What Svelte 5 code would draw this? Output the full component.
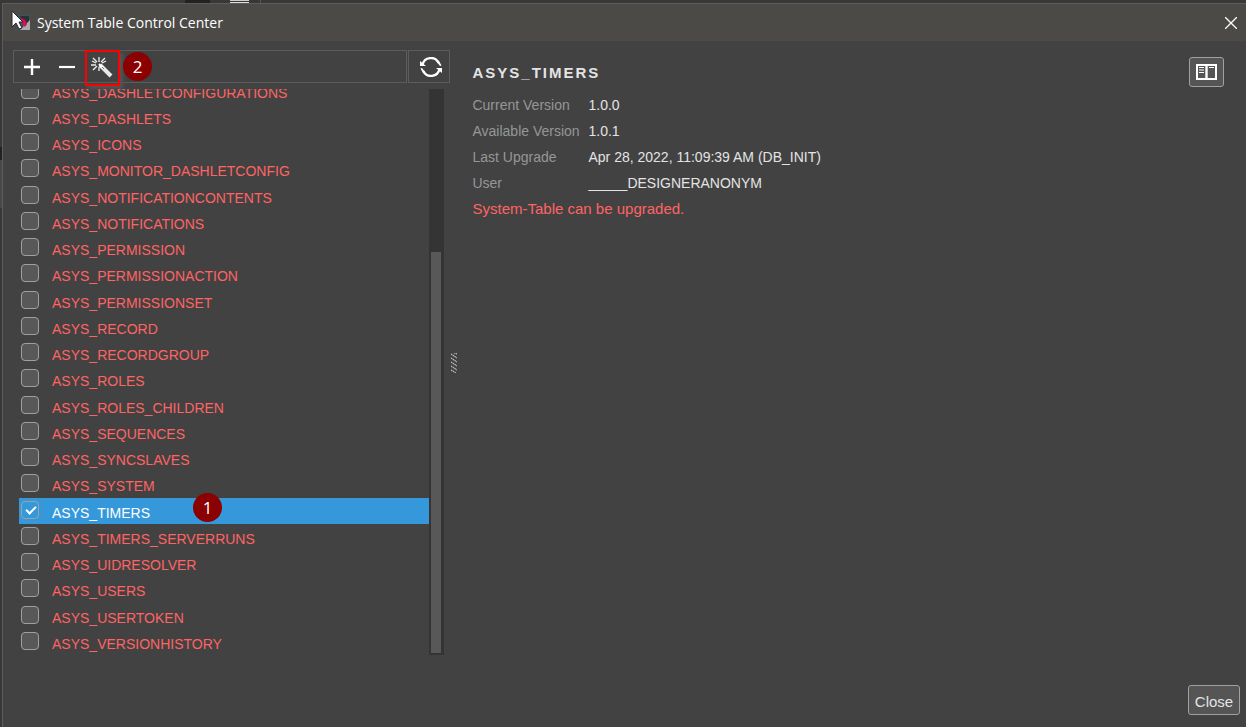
<script lang="ts">
	const tables = [
		'ASYS_DASHLETCONFIGURATIONS',
		'ASYS_DASHLETS',
		'ASYS_ICONS',
		'ASYS_MONITOR_DASHLETCONFIG',
		'ASYS_NOTIFICATIONCONTENTS',
		'ASYS_NOTIFICATIONS',
		'ASYS_PERMISSION',
		'ASYS_PERMISSIONACTION',
		'ASYS_PERMISSIONSET',
		'ASYS_RECORD',
		'ASYS_RECORDGROUP',
		'ASYS_ROLES',
		'ASYS_ROLES_CHILDREN',
		'ASYS_SEQUENCES',
		'ASYS_SYNCSLAVES',
		'ASYS_SYSTEM',
		'ASYS_TIMERS',
		'ASYS_TIMERS_SERVERRUNS',
		'ASYS_UIDRESOLVER',
		'ASYS_USERS',
		'ASYS_USERTOKEN',
		'ASYS_VERSIONHISTORY'
	];

	const details = [
		['Current Version', '1.0.0'],
		['Available Version', '1.0.1'],
		['Last Upgrade', 'Apr 28, 2022, 11:09:39 AM (DB_INIT)'],
		['User', '_____DESIGNERANONYM']
	];

	let checked = $state(['ASYS_TIMERS']);
</script>

<div class="desktop">
	<div class="dialog">
		<header class="titlebar">
			<svg class="app-icon" width="22" height="24" viewBox="0 0 22 24" aria-hidden="true">
				<path d="M6 4h12v15H6z" fill="#34575f" />
				<path d="M8 5h9v8l-4 4z" fill="#2b3038" />
				<path d="M18 9v10H8z" fill="#aaaaad" />
				<path d="M9 7l4 2 2 4-2 3-4-4z" fill="#d3134f" />
				<path d="M0 0v16l4-4 3 6 3-1-3-6h4z" fill="#fff" stroke="#24272f" />
			</svg>
			<h1>System Table Control Center</h1>
			<button class="dismiss" aria-label="Close window">
				<svg width="12" height="12" viewBox="0 0 12 12">
					<path d="M0 0l12 12M12 0L0 12" stroke="#fff" stroke-width="1.3" />
				</svg>
			</button>
		</header>

		<div class="content">
			<section class="tables">
				<div class="toolbar">
					<div class="tools">
						<button aria-label="Add">
							<svg width="16" height="16" viewBox="0 0 16 16">
								<path d="M8 0v16M0 8h16" stroke="#fff" stroke-width="2.4" />
							</svg>
						</button>
						<button aria-label="Remove">
							<svg width="16" height="16" viewBox="0 0 16 16">
								<path d="M0 8h16" stroke="#fff" stroke-width="2.2" />
							</svg>
						</button>
						<button class="wizard" aria-label="Upgrade">
							<svg width="22" height="22" viewBox="0 0 22 22" fill="none">
								<path
									d="M7 0v5M1 1l4 4M13 1l-4 4M0 4l4 2M14 4l-4 2M-1 8h5M1 13l4-4M7 14v-4"
									stroke="#eee"
									stroke-width="1.3"
								/>
								<path d="M8 8l11 11" stroke="#e8e8e8" stroke-width="4" />
								<path d="M7 7l4 4" stroke="#fff" stroke-width="2" />
								<path d="M10 10l2 2" stroke="#777" stroke-width="1" />
							</svg>
							<span class="marker">2</span>
						</button>
					</div>
					<button class="refresh" aria-label="Refresh">
						<svg width="22" height="20" viewBox="0 0 22 20">
							<path
								d="M2.500 8a8.600 8.600 0 0 1 16.200-2M19.500 12a8.600 8.600 0 0 1-16.200 2"
								fill="none"
								stroke="#fff"
								stroke-width="2.300"
							/>
							<path d="M0 4v5h6zM22 16v-5h-6z" fill="#fff" />
							<path d="M19 4l2.500 4.500-1.500.5-3-4zM3 16L.5 11.500l1.500-.5 3 4z" fill="#fff" />
						</svg>
					</button>
				</div>

				<div class="scroller">
					<ul>
						{#each tables as name}
							<li class:selected={checked.includes(name)}>
								<label>
									<input type="checkbox" value={name} bind:group={checked} />
									<span class="name">{name}</span>
								</label>
								{#if name === 'ASYS_TIMERS'}
									<span class="marker">1</span>
								{/if}
							</li>
						{/each}
					</ul>
					<div class="track"><div class="thumb"></div></div>
				</div>
			</section>

			<div class="splitter">
				<svg width="6" height="20" viewBox="0 0 6 20" aria-hidden="true">
					<path
						d="M0 1l6 4M0 5l6 4M0 9l6 4M0 13l6 4M0 17l5 3M3 0l3 1"
						stroke="#c4c4c4"
						stroke-width="1.200"
						stroke-dasharray="1.500 .6"
					/>
				</svg>
			</div>

			<section class="details">
				<div class="info">
					<h2>ASYS_TIMERS</h2>
					<dl>
						{#each details as [term, value]}
							<dt>{term}</dt>
							<dd>{value}</dd>
						{/each}
					</dl>
					<p>System-Table can be upgraded.</p>
				</div>
				<button class="boxed manual" aria-label="Documentation">
					<svg width="21" height="16" viewBox="0 0 21 16">
						<path d="M1 1h19v14H1z" fill="none" stroke="#fff" stroke-width="2" />
						<path d="M10.500 1v14" stroke="#fff" stroke-width="2.400" />
						<path d="M3 3.500h5M3 6h5M3 8.500h5M13 3.500h5" stroke="#fff" stroke-width="1.100" />
					</svg>
				</button>
			</section>
		</div>

		<footer>
			<button class="boxed close">Close</button>
		</footer>
	</div>
</div>

<style>
	:global(body) {
		margin: 0;
		background: #333;
	}

	.desktop {
		box-sizing: border-box;
		min-height: 100vh;
		padding: 3px 0 0 2px;
		display: flex;
		background:
			linear-gradient(#ddd, #ddd) 230px 2px / 19px 1px no-repeat,
			linear-gradient(#ccc, #ccc) 230px 0 / 19px 1px no-repeat,
			linear-gradient(#555, #555) 260px 0 / 1px 3px no-repeat,
			linear-gradient(#222, #222) 185px 0 / 25px 3px no-repeat,
			linear-gradient(#222, #222) 0 147px / 2px 13px no-repeat,
			linear-gradient(#484848, #484848) 0 160px / 2px 48px no-repeat,
			#383838;
		font: 15px/26px 'Liberation Sans', Arial, sans-serif;
	}

	.dialog {
		flex: 1;
		display: flex;
		flex-direction: column;
		border: solid #5c5c5c;
		border-width: 1px 0 0 1px;
		background: #424242;
		color: #e4e4e4;
	}

	button {
		padding: 0;
		border: 0;
		background: none;
		color: inherit;
		font: inherit;
		display: flex;
		align-items: center;
		justify-content: center;
	}

	.titlebar {
		display: flex;
		align-items: center;
		height: 37px;
		padding: 0 9px;
		background: #4c4a47;
	}

	.app-icon {
		margin-right: 3px;
		overflow: visible;
	}

	h1 {
		flex: 1;
		margin: 0;
		color: #fff;
		font: 14px/20px 'Open Sans', 'Noto Sans', sans-serif;
	}

	.content {
		flex: 1;
		display: flex;
		padding-top: 9px;
	}

	.tables {
		box-sizing: border-box;
		width: 36%;
		padding-left: 10px;
		display: flex;
		flex-direction: column;
	}

	.toolbar {
		display: flex;
		gap: 1px;
		height: 33px;
	}

	.tools {
		flex: 1;
		display: flex;
		border: 1px solid #5c5c5c;
	}

	.tools button {
		width: 35px;
	}

	.tools .wizard {
		position: relative;
		margin: -1px 0 -4px 1px;
		border: 2px solid #f00;
		box-shadow: 3px 3px 4px #555;
	}

	.wizard svg {
		overflow: visible;
	}

	.refresh {
		width: 42px;
		padding-left: 4px;
		border: 1px solid #5c5c5c;
	}

	.marker {
		position: absolute;
		width: 29px;
		height: 29px;
		border-radius: 50%;
		background: #8b0000;
		color: #fff;
		font: 17px/29px 'Open Sans', 'Noto Sans', sans-serif;
		text-align: center;
	}

	.wizard .marker {
		left: 36px;
		top: 0;
	}

	.scroller {
		flex: 1;
		display: flex;
		align-items: stretch;
		height: 566px;
		margin: 6px 6px 0 6px;
	}

	ul {
		flex: 1;
		display: grid;
		align-content: end;
		grid-auto-rows: 26px 26px 26px 27px;
		height: 566px;
		margin: 0;
		padding: 0;
		list-style: none;
		overflow: hidden;
		font-size: 14px;
	}

	li {
		position: relative;
		color: #ff6464;
	}

	li.selected {
		background: #3498db;
		color: #fff;
		z-index: 1;
	}

	li .marker {
		left: 174px;
		top: -5px;
	}

	label {
		display: flex;
		align-items: flex-start;
		gap: 13px;
		padding-left: 2px;
	}

	input {
		appearance: none;
		box-sizing: border-box;
		width: 18px;
		height: 18px;
		margin: 3px 0 0;
		border: 1px solid #a0a0a0;
		border-radius: 4px;
		background: #585858;
	}

	input:checked {
		position: relative;
		background: #3498db;
	}

	input:checked::after {
		content: '';
		position: absolute;
		left: 4px;
		top: 4px;
		width: 8px;
		height: 4px;
		border: solid #fff;
		border-width: 0 0 2px 2px;
		transform: rotate(-45deg);
	}

	.name {
		padding-top: 2px;
	}

	.track {
		box-sizing: border-box;
		width: 15px;
		height: 566px;
		padding: 163px 3px 2px 2px;
		background: #343434;
	}

	.thumb {
		height: 100%;
		background: #585858;
	}

	.splitter {
		width: 8px;
		padding-top: 20px;
		display: flex;
		align-items: center;
		justify-content: center;
	}

	.details {
		flex: 1;
		display: flex;
		justify-content: space-between;
		align-items: flex-start;
		padding: 7px 22px 0 14px;
	}

	h2 {
		margin: 1px 0 4px;
		font-size: 15px;
		line-height: 30px;
		letter-spacing: 2px;
	}

	dl {
		display: grid;
		grid-template-columns: 116px auto;
		margin: 0;
		font-size: 14px;
	}

	dt {
		color: #969696;
		white-space: nowrap;
	}

	dd {
		margin: 0;
	}

	p {
		margin: 0;
		color: #ff6464;
	}

	.boxed {
		box-sizing: border-box;
		height: 30px;
		border: 1px solid #a0a0a0;
		border-radius: 3px;
		background: #555;
	}

	.manual {
		width: 35px;
	}

	footer {
		display: flex;
		justify-content: flex-end;
		padding: 30px 6px 12px;
	}

	.close {
		width: 52px;
		padding-top: 4px;
	}
</style>
